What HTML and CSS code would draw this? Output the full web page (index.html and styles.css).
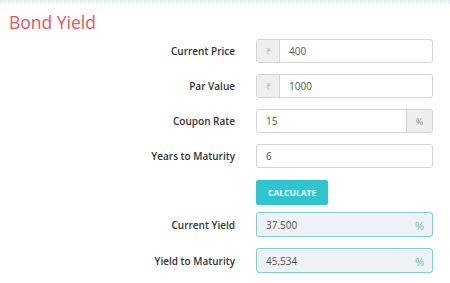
FILE: index.html
```html
<!DOCTYPE html>
<html lang="en">
<head>
  <meta charset="UTF-8">
  <meta name="viewport" content="width=device-width, initial-scale=1.0">
  <title>Bond Yield</title>
  <link rel="stylesheet" href="styles.css">
</head>
<body>
  <div class="calc">
    <h1 class="calc-title">Bond Yield</h1>

    <form class="calc-form">
      <label class="calc-label" for="price">Current Price</label>
      <div class="field">
        <span class="addon">&#8377;</span>
        <input class="field-input" id="price" type="text" value="400">
      </div>

      <label class="calc-label" for="par">Par Value</label>
      <div class="field">
        <span class="addon">&#8377;</span>
        <input class="field-input" id="par" type="text" value="1000">
      </div>

      <label class="calc-label" for="coupon">Coupon Rate</label>
      <div class="field">
        <input class="field-input" id="coupon" type="text" value="15">
        <span class="addon addon-right">%</span>
      </div>

      <label class="calc-label" for="years">Years to Maturity</label>
      <div class="field">
        <input class="field-input" id="years" type="text" value="6">
      </div>

      <span></span>
      <div class="actions">
        <button type="button" class="btn">CALCULATE</button>
      </div>

      <label class="calc-label" for="cy">Current Yield</label>
      <div class="field result">
        <input class="field-input" id="cy" type="text" value="37.500" readonly>
        <span class="unit">%</span>
      </div>

      <label class="calc-label" for="ytm">Yield to Maturity</label>
      <div class="field result">
        <input class="field-input" id="ytm" type="text" value="45.534" readonly>
        <span class="unit">%</span>
      </div>
    </form>
  </div>
</body>
</html>
```

FILE: styles.css
```css
* {
  box-sizing: border-box;
  margin: 0;
  padding: 0;
}

body {
  font-family: 'Open Sans', sans-serif;
  background: #fff;
  color: #333;
  border-top: 2px solid #e6eef1;
}

.calc {
  border-top: 2px dotted #eef3f5;
  padding: 6px 17px 0 9px;
}

.calc-title {
  font-size: 17.5px;
  font-weight: 400;
  color: #e9525d;
  line-height: 24px;
  margin-bottom: 5px;
}

.calc-form {
  display: grid;
  grid-template-columns: 1fr 177px;
  column-gap: 21px;
  row-gap: 11px;
  align-items: center;
}

.calc-label {
  text-align: right;
  font-size: 10px;
  font-weight: 600;
  color: #333;
}

.field {
  display: flex;
  height: 24px;
  border: 1px solid #d4d4d4;
  border-radius: 3px;
  overflow: hidden;
  background: #fff;
}

.addon {
  width: 23px;
  flex: none;
  display: flex;
  align-items: center;
  justify-content: center;
  background: #eee;
  color: #bbb;
  font-size: 9px;
  border-right: 1px solid #d4d4d4;
}

.addon-right {
  width: 26px;
  border-right: none;
  border-left: 1px solid #d4d4d4;
  color: #999;
}

.field-input {
  flex: 1;
  min-width: 0;
  border: none;
  outline: none;
  background: transparent;
  font-family: inherit;
  font-size: 10px;
  color: #555;
  padding: 0 9px;
}

.actions {
  margin-bottom: -4px;
}

.btn {
  height: 25px;
  padding: 0 12px;
  background: #2ec5d1;
  color: #fff;
  border: none;
  border-radius: 2px;
  font-family: inherit;
  font-size: 8.5px;
  font-weight: 700;
}

.result {
  height: 25px;
  background: #eef1f5;
  border-color: #7ecfd6;
}

.unit {
  display: flex;
  align-items: flex-end;
  padding: 0 8px 3px 0;
  color: #5fc4da;
  font-size: 11px;
}
```
